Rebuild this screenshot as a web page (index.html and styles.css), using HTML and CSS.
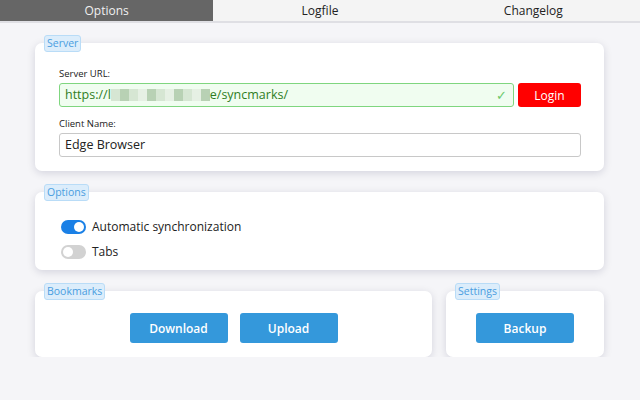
FILE: index.html
```html
<!DOCTYPE html>
<html lang="en">
<head>
  <meta charset="UTF-8">
  <title>Syncmarks Options</title>
  <link rel="stylesheet" href="styles.css">
</head>
<body>
  <ul class="tabs">
    <li class="tab active">Options</li>
    <li class="tab">Logfile</li>
    <li class="tab">Changelog</li>
  </ul>

  <div class="content">
    <div class="card">
      <span class="legend">Server</span>
      <label class="field-label">Server URL:</label>
      <div class="url-row">
        <div class="input valid">
          <span>https://l</span><span class="blur"><i></i><i class="b2"></i><i></i><i class="b3"></i><i class="b2"></i><i></i><i class="b3"></i><i class="b2"></i><i></i><i class="b3"></i><i class="b2"></i></span><span>e/syncmarks/</span>
          <span class="check">&#10003;</span>
        </div>
        <button class="btn-login">Login</button>
      </div>
      <label class="field-label">Client Name:</label>
      <div class="input">Edge Browser</div>
    </div>

    <div class="card options">
      <span class="legend">Options</span>
      <div class="switch-row"><span class="switch on"></span>Automatic synchronization</div>
      <div class="switch-row"><span class="switch"></span>Tabs</div>
    </div>

    <div class="bottom-row">
      <div class="card buttons">
        <span class="legend">Bookmarks</span>
        <button class="btn">Download</button>
        <button class="btn">Upload</button>
      </div>
      <div class="card buttons">
        <span class="legend">Settings</span>
        <button class="btn">Backup</button>
      </div>
    </div>
  </div>
</body>
</html>
```

FILE: styles.css
```css
body {
  margin: 0;
  font-family: "Open Sans", "Noto Sans", sans-serif;
  background-color: #f5f5f8;
  color: #222;
}

.tabs {
  list-style: none;
  margin: 0;
  padding: 0;
  display: flex;
  background-color: #f4f4f4;
  border-bottom: 2px solid #dfdfe4;
}

.tab {
  flex: 1;
  height: 21px;
  line-height: 21px;
  text-align: center;
  font-size: 12px;
  color: #222;
}

.tab.active {
  background-color: #666;
  color: #f0f0f0;
}

.content {
  padding: 20px 36px 0 35px;
  display: flex;
  flex-direction: column;
  gap: 21px;
}

.card {
  position: relative;
  background: #fff;
  border-radius: 7px;
  box-shadow: 0 2px 8px rgba(0, 0, 60, 0.14);
  padding: 24px 23px 14px 24px;
}

.legend {
  position: absolute;
  top: -8px;
  left: 9px;
  padding: 0 2px;
  height: 15px;
  line-height: 15px;
  font-size: 10.5px;
  color: #4a9de0;
  background: #dcedfb;
  border: 1px solid #b9dcf7;
  border-radius: 3px;
}

.field-label {
  display: block;
  font-size: 9.5px;
  color: #222;
  margin-bottom: 3px;
}

.url-row {
  display: flex;
  gap: 4px;
  margin-bottom: 10px;
}

.input {
  position: relative;
  flex: 1;
  height: 22px;
  line-height: 22px;
  border: 1px solid #c8c8c8;
  border-radius: 3px;
  padding: 0 5px;
  font-size: 12.5px;
  color: #222;
}

.input.valid {
  background: #f0fdf0;
  border: 1px solid #7fd67f;
  color: #2f7d1f;
}

.blur {
  display: inline-flex;
  vertical-align: -2px;
}

.blur i {
  width: 9px;
  height: 12px;
  background: #d6e6d3;
}

.blur i.b2 {
  background: #b8d1b4;
}

.blur i.b3 {
  background: #e6f0e4;
}

.check {
  position: absolute;
  right: 6px;
  top: 0;
  color: #6cc96c;
  font-size: 13px;
}

.btn-login {
  width: 63px;
  height: 24px;
  border: none;
  border-radius: 3px;
  background: #ff0000;
  color: #fff;
  font-family: inherit;
  font-size: 12px;
}

.options {
  padding: 22px 24px 6px 26px;
}

.switch-row {
  display: flex;
  align-items: center;
  gap: 6px;
  height: 25px;
  font-size: 12px;
}

.switch {
  position: relative;
  width: 25px;
  height: 14px;
  border-radius: 7px;
  background: #d2d2d2;
}

.switch::after {
  content: '';
  position: absolute;
  top: 2px;
  left: 2px;
  width: 10px;
  height: 10px;
  border-radius: 50%;
  background: #fff;
}

.switch.on {
  background: #1a80e6;
}

.switch.on::after {
  left: 13px;
}

.bottom-row {
  display: flex;
  gap: 14px;
}

.bottom-row .card:first-child {
  flex: 1;
}

.bottom-row .card:last-child {
  width: 158px;
  box-sizing: border-box;
}

.buttons {
  display: flex;
  justify-content: center;
  gap: 12px;
  padding: 22px 0 14px;
}

.btn {
  width: 98px;
  height: 30px;
  border: none;
  border-radius: 3px;
  background: #3498db;
  color: #fff;
  font-family: inherit;
  font-size: 12px;
  font-weight: 600;
}
```
